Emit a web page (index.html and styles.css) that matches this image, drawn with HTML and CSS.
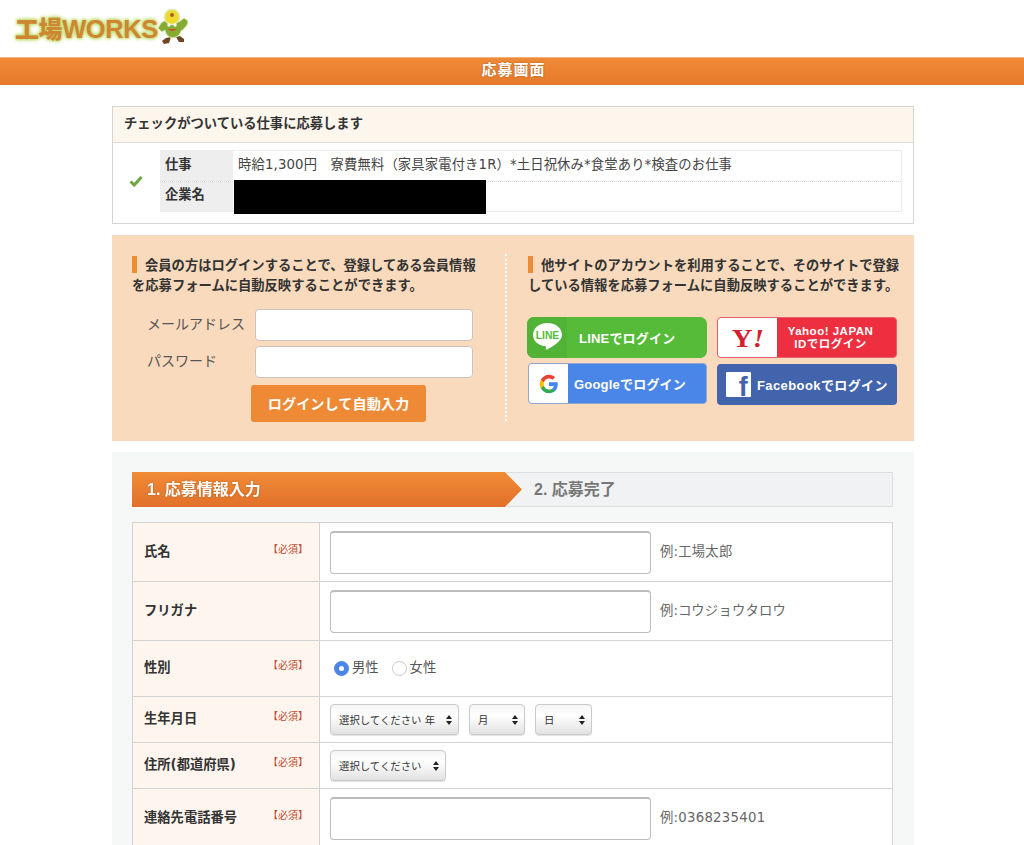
FILE: index.html
```html
<!DOCTYPE html>
<html lang="ja">
<head>
<meta charset="utf-8">
<title>応募画面</title>
<link rel="stylesheet" href="styles.css">
</head>
<body>
<div class="page">
  <header class="site-header">
    <div class="logo">
      <span class="logo-text"><span class="logo-jp">工場</span>WORKS</span>
      <svg class="mascot" width="32" height="36" viewBox="0 0 32 36">
        <path d="M9 30 L5 33 L7 36 L12 35 L14 29Z" fill="#6d4520"/>
        <path d="M19 29 L22 34 L27 34 L27 31 L23 28Z" fill="#6d4520"/>
        <path d="M8 13 C3 14 3 18 1 20 L5 24 L8 22 C9 31 21 33 24 23 C27 21 31 17 31 13 L27 10 L22 14 C18 11 12 11 8 13Z" fill="#86ab33" stroke="#d3e6a0" stroke-width="1"/>
        <ellipse cx="15" cy="9" rx="7.500" ry="7.500" fill="#efd92c" stroke="#dfe9a5" stroke-width="1.500"/>
        <circle cx="15" cy="7" r="2" fill="#a8632a"/>
        <circle cx="12" cy="17" r="1.700" fill="#fff"/>
        <circle cx="18" cy="17" r="1.700" fill="#fff"/>
        <path d="M11 21 Q15 25 20 21Z" fill="#c9502a"/>
      </svg>
    </div>
  </header>

  <h1 class="band">応募画面</h1>

  <main class="content">
    <section class="job-box">
      <h2 class="job-head">チェックがついている仕事に応募します</h2>
      <div class="job-body">
        <svg class="check" width="14" height="12" viewBox="0 0 14 12">
          <path d="M1.500 6.500 L5.200 10 L12.500 2" fill="none" stroke="#6aa83f" stroke-width="3"/>
        </svg>
        <dl class="job-table">
          <div class="job-row">
            <dt>仕事</dt>
            <dd>時給1,300円　寮費無料（家具家電付き1R）*土日祝休み*食堂あり*検査のお仕事</dd>
          </div>
          <div class="job-row">
            <dt>企業名</dt>
            <dd><span class="redacted"></span></dd>
          </div>
        </dl>
      </div>
    </section>

    <section class="login-panel">
      <div class="login-left">
        <p class="lead"><span class="lead-bar"></span>会員の方はログインすることで、登録してある会員情報を応募フォームに自動反映することができます。</p>
        <div class="login-row">
          <label class="login-label">メールアドレス</label>
          <input class="login-input" type="text">
        </div>
        <div class="login-row">
          <label class="login-label">パスワード</label>
          <input class="login-input" type="password">
        </div>
        <button class="login-btn" type="button"><span class="login-btn-text">ログインして自動入力</span></button>
      </div>
      <div class="login-right">
        <p class="lead"><span class="lead-bar"></span>他サイトのアカウントを利用することで、そのサイトで登録している情報を応募フォームに自動反映することができます。</p>
        <div class="sns-grid">
          <a class="sns sns-line">
            <span class="sns-icon">
              <svg width="33" height="33" viewBox="0 0 32 32">
                <path d="M16 2 C7.500 2 2 7.300 2 13.500 C2 19.300 7 23.500 13.500 24.300 C14.500 24.500 14.500 25.500 14.300 27 C14.200 28 15 28.200 16 27.500 C20 25 30 20 30 13.500 C30 7.300 24.500 2 16 2Z" fill="#fff"/>
                <text x="16" y="17" class="line-word">LINE</text>
              </svg>
            </span>
            <span class="sns-label">LINEでログイン</span>
          </a>
          <a class="sns sns-yahoo">
            <span class="sns-icon sns-icon-white">
              <svg width="60" height="40" viewBox="0 0 60 40">
                <text x="14" y="29" class="yahoo-word" textLength="33" lengthAdjust="spacingAndGlyphs">Y<tspan class="yahoo-bang">!</tspan></text>
              </svg>
            </span>
            <span class="sns-label sns-label-small">Yahoo! JAPAN<br>IDでログイン</span>
          </a>
          <a class="sns sns-google">
            <span class="sns-icon sns-icon-white">
              <svg width="20" height="20" viewBox="0 0 48 48">
                <path d="M45 24.500c0-1.500-.1-3-.4-4.500H24v8.500h11.800c-.5 2.800-2.100 5.100-4.400 6.700v5.500h7.100C42.700 36.800 45 31.200 45 24.500z" fill="#4285f4"/>
                <path d="M24 46c5.900 0 10.900-2 14.500-5.300l-7.100-5.500c-2 1.300-4.500 2.100-7.400 2.100-5.700 0-10.500-3.800-12.300-9H4.400v5.700C8 41.100 15.400 46 24 46z" fill="#34a853"/>
                <path d="M11.700 28.300c-.9-2.700-.9-5.900 0-8.600V14H4.400c-3 6-3 14 0 20z" fill="#fbbc05"/>
                <path d="M24 10.700c3.200 0 6 1.100 8.300 3.300l6.300-6.300C34.800 4.100 29.800 2 24 2 15.400 2 8 6.900 4.400 14l7.300 5.700c1.800-5.200 6.600-9 12.300-9z" fill="#ea4335"/>
              </svg>
            </span>
            <span class="sns-label">Googleでログイン</span>
          </a>
          <a class="sns sns-facebook">
            <span class="fb-mark">f</span>
            <span class="sns-label">Facebookでログイン</span>
          </a>
        </div>
      </div>
    </section>

    <section class="form-panel">
      <div class="steps">
        <div class="step-edge"><div class="step-active">1. 応募情報入力</div></div>
        <div class="step-next">2. 応募完了</div>
      </div>
      <table class="form-table">
        <tr class="row-59">
          <th><div class="th-in"><span>氏名</span><em>【必須】</em></div></th>
          <td><div class="field"><input class="text-input" type="text"><span class="example">例:工場太郎</span></div></td>
        </tr>
        <tr class="row-59">
          <th><div class="th-in"><span>フリガナ</span></div></th>
          <td><div class="field"><input class="text-input" type="text"><span class="example">例:コウジョウタロウ</span></div></td>
        </tr>
        <tr class="row-56">
          <th><div class="th-in"><span>性別</span><em>【必須】</em></div></th>
          <td>
            <div class="radios">
              <span class="radio radio-on"></span><span class="radio-text">男性</span>
              <span class="radio"></span><span class="radio-text">女性</span>
            </div>
          </td>
        </tr>
        <tr class="row-46">
          <th><div class="th-in"><span>生年月日</span><em>【必須】</em></div></th>
          <td>
            <div class="selects">
              <div class="select select-year">選択してください 年<span class="updown"></span></div>
              <div class="select select-month">月<span class="updown"></span></div>
              <div class="select select-day">日<span class="updown"></span></div>
            </div>
          </td>
        </tr>
        <tr class="row-46">
          <th><div class="th-in"><span>住所(都道府県)</span><em>【必須】</em></div></th>
          <td>
            <div class="selects">
              <div class="select select-pref">選択してください<span class="updown"></span></div>
            </div>
          </td>
        </tr>
        <tr class="row-59">
          <th><div class="th-in"><span>連絡先電話番号</span><em>【必須】</em></div></th>
          <td><div class="field"><input class="text-input" type="text"><span class="example">例:0368235401</span></div></td>
        </tr>
      </table>
    </section>
  </main>
</div>
</body>
</html>
```
FILE: styles.css
```css
* { box-sizing: border-box; }
html, body { margin: 0; padding: 0; background: #fff; }
body {
  font-family: "DejaVu Sans", "Noto Sans CJK JP", sans-serif;
  color: #3a3a3a;
}
.page { height: 845px; overflow: hidden; }

.site-header { height: 57px; padding: 8px 0 0 15px; }
.logo { display: flex; align-items: flex-start; }
.logo-text {
  margin-top: 5px;
  font-family: "Liberation Sans", "Noto Sans CJK JP", sans-serif;
  font-size: 25.500px;
  font-weight: 700;
  line-height: 30px;
  letter-spacing: -0.400px;
  color: #cf8632;
  text-shadow: 0 0 2px #c3dc70, 0 0 3px #c3dc70, 0 0 4px #c3dc70, 0 0 5px #d5e79a;
  white-space: nowrap;
}
.logo-jp { font-family: "Noto Sans CJK JP", sans-serif; font-weight: 900; font-size: 24px; }
.mascot { margin-left: -1px; }

.band {
  margin: 0;
  height: 28px;
  padding-left: 3px;
  background: linear-gradient(#ef8a38, #e67a2b);
  border-top: 1px solid #f3b27c;
  color: #fff;
  font-size: 15px;
  font-weight: 700;
  line-height: 25px;
  letter-spacing: 1px;
  text-align: center;
  text-shadow: 0 0 2px rgba(120, 60, 10, .6);
}

.content { width: 802px; margin: 21px 0 0 112px; }

.job-box { height: 118px; border: 1px solid #d5d5d5; }
.job-head {
  margin: 0;
  height: 36px;
  padding-left: 11px;
  background: #fdf6ec;
  border-bottom: 1px solid #e0dcd6;
  font-size: 13.300px;
  font-weight: 700;
  line-height: 34px;
  color: #333;
}
.job-body { display: flex; align-items: center; padding: 7px 11px 0 0; }
.check { margin: 0 17px 0 16px; flex: none; }
.job-table { flex: 1; margin: 0; border: 1px solid #ececec; border-left: 0; }
.job-row { display: flex; height: 30px; }
.job-row + .job-row { border-top: 1px dotted #d8d8d8; }
.job-row dt {
  width: 73px;
  padding-left: 5px;
  background: #eeeeee;
  font-size: 13.300px;
  font-weight: 700;
  line-height: 28px;
  color: #333;
}
.job-row + .job-row dt { line-height: 26px; }
.job-row dd {
  margin: 0;
  flex: 1;
  padding-left: 5px;
  font-size: 13.300px;
  line-height: 28px;
  letter-spacing: .15px;
  color: #444;
  position: relative;
}
.redacted {
  position: absolute;
  left: 1px;
  top: -2px;
  width: 252px;
  height: 34px;
  background: #000;
}

.login-panel {
  display: flex;
  height: 206px;
  margin-top: 11px;
  padding: 19px 12px 20px 20px;
  background: #f9dabc;
}
.login-left { width: 373px; flex: none; padding-right: 26px; }
.login-right { flex: 1; padding-left: 21px; border-left: 2px dotted #fff; }
.lead {
  margin: 2px 0 0;
  font-size: 13.300px;
  font-weight: 700;
  line-height: 20px;
  height: 39px;
  color: #333;
}
.lead-bar {
  display: inline-block;
  width: 5px;
  height: 17px;
  margin-right: 8px;
  vertical-align: -3px;
  background: #ee8c35;
}
.login-row { display: flex; align-items: center; margin-top: 5px; }
.lead + .login-row { margin-top: 14px; }
.login-label { width: 123px; padding: 0 0 4px 15px; font-size: 14px; color: #555; }
.login-input {
  width: 218px;
  height: 32px;
  background: #fff;
  border: 1px solid #cbc3bd;
  border-radius: 4px;
}
.login-btn {
  display: block;
  width: 175px;
  height: 37px;
  margin: 7px 0 0 119px;
  padding: 0 0 1px;
  border: 0;
  border-radius: 3px;
  background: #ee8a36;
  font-family: inherit;
  font-size: 14.200px;
  font-weight: 700;
  color: #fff;
}

.sns-grid {
  display: grid;
  grid-template-columns: 180px 180px;
  column-gap: 10px;
  row-gap: 5px;
  margin-top: 22px;
  margin-left: -1px;
}
.sns {
  display: flex;
  align-items: center;
  height: 41px;
  border-radius: 4px;
  overflow: hidden;
  color: #fff;
  font-family: "Liberation Sans", "Noto Sans CJK JP", sans-serif;
  font-weight: 700;
  font-size: 13px;
  letter-spacing: .2px;
  white-space: nowrap;
}
.sns-icon { display: flex; align-items: center; justify-content: center; flex: none; }
.sns-icon-white { background: #fff; height: 100%; }
.sns-label { flex: 1; }
.sns-label-small { font-size: 11.500px; line-height: 13px; text-align: center; padding-right: 12px; letter-spacing: .5px; }

.sns-line { background: #55bb38; border-radius: 7px; }
.sns-line .sns-icon { width: 40px; height: 100%; background: #50b335; }
.sns-line .sns-label { padding-left: 12px; }
.line-word {
  font-family: "Liberation Sans", sans-serif;
  font-size: 10px;
  font-weight: 700;
  letter-spacing: 0;
  fill: #55bb38;
  text-anchor: middle;
}

.sns-yahoo { background: #ed2f40; border: 1px solid #e0626c; }
.sns-yahoo .sns-icon { width: 59px; }
.yahoo-word {
  font-family: "Liberation Serif", serif;
  font-size: 25px;
  font-weight: 700;
  fill: #d3202f;
}
.yahoo-bang { font-style: italic; }

.sns-google { margin-left: 1px; background: #4a86e8; border: 1px solid #8fa7cf; }
.sns-google .sns-icon { width: 39px; }
.sns-google .sns-label { padding-left: 6px; }

.sns-facebook { background: #4264ad; padding-left: 9px; margin-top: 1px; }
.fb-mark {
  flex: none;
  display: block;
  width: 25px;
  height: 25px;
  padding: 1px 3px 0 0;
  background: #fff;
  border-radius: 1px;
  color: #4264ad;
  font-size: 27px;
  line-height: 28px;
  text-align: right;
}
.sns-facebook .sns-label { padding-left: 6px; letter-spacing: .4px; }

.form-panel {
  margin-top: 11px;
  padding: 20px 21px 0 20px;
  background: #f6f8f8;
  height: 400px;
}
.steps {
  display: flex;
  height: 35px;
  background: #f1f2f3;
  border: 1px solid #dcdfe0;
  border-left: 0;
}
.step-edge { filter: drop-shadow(1px 0 0 #fff); height: 35px; margin-top: -1px; flex: none; }
.step-active {
  width: 390px;
  height: 35px;
  padding-left: 15px;
  background: linear-gradient(#f08c38, #e2702a);
  clip-path: polygon(0 0, 373px 0, 100% 50%, 373px 100%, 0 100%);
  color: #fff;
  font-family: "Liberation Sans", "Noto Sans CJK JP", sans-serif;
  font-size: 16px;
  font-weight: 700;
  line-height: 36px;
  text-shadow: 0 0 2px rgba(120, 60, 10, .5);
}
.step-next {
  padding-left: 12px;
  color: #777;
  font-family: "Liberation Sans", "Noto Sans CJK JP", sans-serif;
  font-size: 16px;
  font-weight: 700;
  line-height: 33px;
}

.form-table {
  width: 761px;
  margin-top: 15px;
  border-collapse: collapse;
  background: #fff;
  table-layout: fixed;
}
.form-table th, .form-table td { border: 1px solid #d3d3d3; padding: 0; }
.form-table th {
  width: 187px;
  background: #fef6ee;
  text-align: left;
  font-size: 13.300px;
  font-weight: 700;
  color: #333;
}
.form-table td { padding-left: 10px; }
.row-59 { height: 59px; }
.row-56 { height: 56px; }
.row-46 { height: 46px; }
.th-in { display: flex; justify-content: space-between; align-items: center; padding: 0 16px 4px 11px; }
.th-in em {
  font-style: normal;
  font-size: 10px;
  font-weight: 400;
  color: #c0492f;
  margin: -4px -5px 0 0;
}
.field { display: flex; align-items: center; }
.text-input {
  width: 321px;
  height: 43px;
  background: #fff;
  border: 1px solid #bdbdbd;
  border-top-width: 2px;
  border-radius: 4px;
}
.example { margin: 0 0 4px 9px; font-size: 13.300px; letter-spacing: .25px; color: #666; }

.radios { display: flex; align-items: center; padding-left: 4px; }
.radio {
  width: 15px;
  height: 15px;
  border: 1px solid #c9c9c9;
  border-radius: 50%;
  background: #fff;
  margin-right: 3px;
}
.radio-on { background: #4a86e8; border-color: #4a86e8; position: relative; }
.radio-on::after {
  content: "";
  position: absolute;
  left: 4px;
  top: 4px;
  width: 5px;
  height: 5px;
  border-radius: 50%;
  background: #fff;
}
.radio-text { margin: 0 13px 4px 0; font-size: 13.300px; color: #555; }

.selects { display: flex; gap: 10px; }
.select {
  display: flex;
  align-items: center;
  justify-content: space-between;
  height: 31px;
  padding: 0 6px 0 8px;
  border: 1px solid #c9caca;
  border-radius: 4px;
  background: linear-gradient(#f4f4f4 0%, #ffffff 35%, #e2e2e2 100%);
  box-shadow: 0 1px 1px rgba(0, 0, 0, .12);
  font-size: 10.400px;
  color: #333;
}
.select-year { width: 129px; }
.select-month { width: 56px; }
.select-day { width: 57px; }
.select-pref { width: 116px; }
.updown { display: block; width: 6px; height: 10px; position: relative; }
.updown::before, .updown::after {
  content: "";
  position: absolute;
  left: 0;
  border-left: 3px solid transparent;
  border-right: 3px solid transparent;
}
.updown::before { top: 0; border-bottom: 4px solid #222; }
.updown::after { bottom: 0; border-top: 4px solid #222; }
```
